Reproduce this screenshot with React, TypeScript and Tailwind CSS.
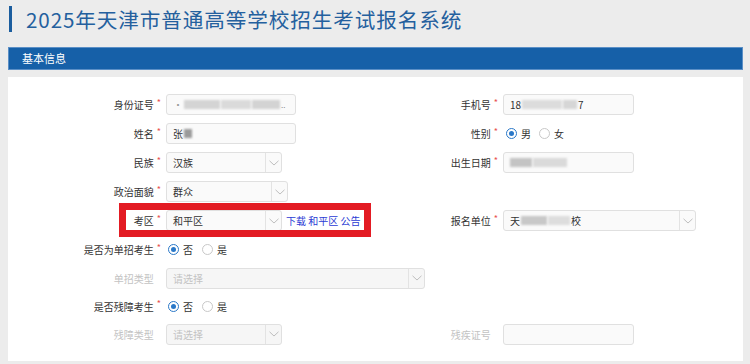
import React from "react";

const font = "font-['Noto_Sans_CJK_SC','Noto_Sans',sans-serif]";

const Chevron = () => (
  <svg width="10" height="6" viewBox="0 0 10 6" fill="none">
    <polyline points="0.5,0.8 5,5 9.5,0.8" stroke="#b8b8b8" strokeWidth="0.9" />
  </svg>
);

const Blur = ({ w, shade = "#c9c9c9" }: { w: number; shade?: string }) => (
  <span
    className="inline-block h-[9px] blur-[1.2px]"
    style={{ width: w, background: shade }}
  />
);

const Label: React.FC<{ text: string; width: string; required?: boolean; muted?: boolean }> = ({
  text,
  width,
  required = true,
  muted = false,
}) => (
  <div className={`flex shrink-0 items-center justify-end pr-[5px] ${width}`}>
    <span className={`text-[10px] ${muted ? "text-[#c3c3c3]" : "text-[#333]"}`}>{text}</span>
    <span className={`ml-[3px] -mt-[5px] text-[9px] leading-none text-[#e9524f] ${required ? "" : "invisible"}`}>
      *
    </span>
  </div>
);

const Input: React.FC<{ width: string; children?: React.ReactNode }> = ({ width, children }) => (
  <div
    className={`flex h-[21px] shrink-0 items-center gap-[1px] rounded-[3px] border border-[#e0e0e0] bg-[#fafafa] pl-[6px] text-[10px] text-[#333] ${width}`}
  >
    {children}
  </div>
);

const Select: React.FC<{ width: string; value?: string; disabled?: boolean; children?: React.ReactNode }> = ({
  width,
  value,
  disabled,
  children,
}) => (
  <div
    className={`flex h-[21px] shrink-0 items-stretch rounded-[3px] border border-[#e0e0e0] text-[10px] ${
      disabled ? "bg-[#f6f6f6]" : "bg-[#fafafa]"
    } ${width}`}
  >
    <div className={`flex flex-1 items-center gap-[1px] pl-[6px] ${disabled ? "text-[#c3c3c3]" : "text-[#333]"}`}>
      {value ?? children}
    </div>
    <div className="flex w-[16px] items-center justify-center border-l border-[#e3e3e3]">
      <Chevron />
    </div>
  </div>
);

const Radio: React.FC<{ checked?: boolean; text: string }> = ({ checked, text }) => (
  <div className="flex items-center">
    <span
      className={`flex h-[11px] w-[11px] items-center justify-center rounded-full border bg-white ${
        checked ? "border-[#2a78c8]" : "border-[#c8c8c8]"
      }`}
    >
      {checked && <span className="h-[5px] w-[5px] rounded-full bg-[#2a78c8]" />}
    </span>
    <span className="ml-[4px] text-[10px] text-[#333]">{text}</span>
  </div>
);

const Row: React.FC<{ h: string; left?: React.ReactNode; right?: React.ReactNode }> = ({ h, left, right }) => (
  <div className={`grid grid-cols-[367px_1fr] ${h}`}>
    <div className="relative flex items-center">{left}</div>
    <div className="flex items-center">{right}</div>
  </div>
);

const L = "w-[158px]";
const R = "w-[128px]";

export default function App() {
  return (
    <div className={`min-h-[364px] w-[750px] bg-[#ececec] ${font}`}>
      <div className="flex items-center pt-[6px]">
        <div className="ml-[9px] h-[26px] w-[3px] bg-[#1b5d9e]" />
        <h1 className="ml-[14px] text-[20.6px] leading-[26px] tracking-[0.9px] text-[#24609e]">
          2025年天津市普通高等学校招生考试报名系统
        </h1>
      </div>

      <div className="ml-[8px] mt-[15px] flex h-[23px] w-[735px] items-center border border-[#5b8fc6] bg-[#1660a8] pl-[13px] text-[11px] text-white">
        基本信息
      </div>

      <div className="ml-[8px] mt-[7px] w-[735px] bg-white pb-[13px] pt-[13px]">
        <Row
          h="h-[29px]"
          left={
            <>
              <Label text="身份证号" width={L} />
              <Input width="w-[130px]">
                <span className="text-[#999]">·</span>
                <Blur w={36} shade="#d4d4d4" />
                <Blur w={30} shade="#dadada" />
                <Blur w={28} shade="#d3d3d3" />
                <span className="text-[8px] text-[#888]">..</span>
              </Input>
            </>
          }
          right={
            <>
              <Label text="手机号" width={R} />
              <Input width="w-[131px]">
                <span>18</span>
                <Blur w={40} shade="#dcdcdc" />
                <Blur w={14} shade="#d6d6d6" />
                <span>7</span>
              </Input>
            </>
          }
        />
        <Row
          h="h-[29px]"
          left={
            <>
              <Label text="姓名" width={L} />
              <Input width="w-[130px]">
                <span>张</span>
                <Blur w={8} shade="#9a9a9a" />
              </Input>
            </>
          }
          right={
            <>
              <Label text="性别" width={R} />
              <div className="ml-[3px] flex items-center gap-[8px]">
                <Radio checked text="男" />
                <Radio text="女" />
              </div>
            </>
          }
        />
        <Row
          h="h-[29px]"
          left={
            <>
              <Label text="民族" width={L} />
              <Select width="w-[116px]" value="汉族" />
            </>
          }
          right={
            <>
              <Label text="出生日期" width={R} />
              <Input width="w-[131px]">
                <Blur w={22} shade="#c4c4c4" />
                <Blur w={34} shade="#dadada" />
              </Input>
            </>
          }
        />
        <Row
          h="h-[29px]"
          left={
            <>
              <Label text="政治面貌" width={L} />
              <Select width="w-[122px]" value="群众" />
            </>
          }
        />
        <Row
          h="h-[29px]"
          left={
            <>
              <div className="pointer-events-none absolute left-[111px] top-[-3px] h-[34px] w-[252px] border-[7px] border-[#e31b23]" />
              <Label text="考区" width={L} />
              <Select width="w-[116px]" value="和平区" />
              <span className="ml-[4px] text-[10px] text-[#2b3bd4]">下载 和平区 公告</span>
            </>
          }
          right={
            <>
              <Label text="报名单位" width={R} />
              <Select width="w-[193px]">
                <span>天</span>
                <Blur w={26} shade="#c8c8c8" />
                <Blur w={22} shade="#dddddd" />
                <span>校</span>
              </Select>
            </>
          }
        />
        <Row
          h="h-[29px]"
          left={
            <>
              <Label text="是否为单招考生" width={L} />
              <div className="ml-[2px] flex items-center gap-[9px]">
                <Radio checked text="否" />
                <Radio text="是" />
              </div>
            </>
          }
        />
        <Row
          h="h-[28px]"
          left={
            <>
              <Label text="单招类型" width={L} required={false} muted />
              <Select width="w-[259px]" value="请选择" disabled />
            </>
          }
        />
        <Row
          h="h-[28px]"
          left={
            <>
              <Label text="是否残障考生" width={L} />
              <div className="ml-[2px] flex items-center gap-[9px]">
                <Radio checked text="否" />
                <Radio text="是" />
              </div>
            </>
          }
        />
        <Row
          h="h-[28px]"
          left={
            <>
              <Label text="残障类型" width={L} required={false} muted />
              <Select width="w-[116px]" value="请选择" disabled />
            </>
          }
          right={
            <>
              <Label text="残疾证号" width={R} required={false} muted />
              <Input width="w-[131px]" />
            </>
          }
        />
      </div>
    </div>
  );
}
